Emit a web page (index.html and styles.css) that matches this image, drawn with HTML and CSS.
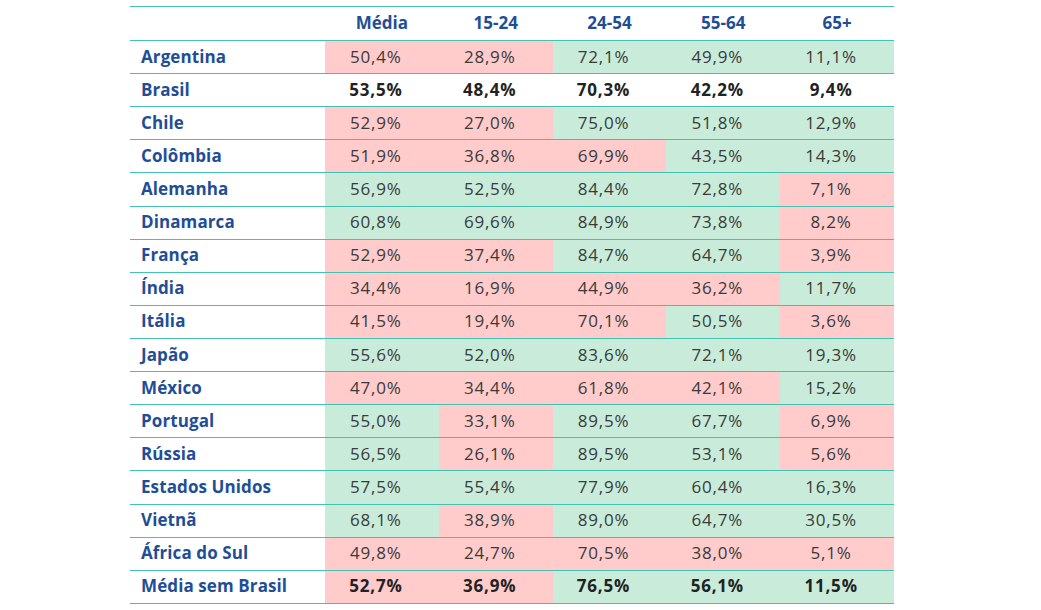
FILE: index.html
```html
<!DOCTYPE html>
<html lang="pt-BR">
<head>
<meta charset="utf-8">
<title>Taxa de participação</title>
<link rel="stylesheet" href="styles.css">
</head>
<body>
<table class="tbl">
  <colgroup>
    <col class="c-label"><col class="c-num"><col class="c-num"><col class="c-num"><col class="c-num"><col class="c-num">
  </colgroup>
  <thead>
    <tr><th></th><th>Média</th><th>15-24</th><th>24-54</th><th>55-64</th><th>65+</th></tr>
  </thead>
  <tbody>
    <tr><th>Argentina</th><td class="r">50,4%</td><td class="r">28,9%</td><td class="g">72,1%</td><td class="g">49,9%</td><td class="g">11,1%</td></tr>
    <tr class="bold"><th>Brasil</th><td>53,5%</td><td>48,4%</td><td>70,3%</td><td>42,2%</td><td>9,4%</td></tr>
    <tr><th>Chile</th><td class="r">52,9%</td><td class="r">27,0%</td><td class="g">75,0%</td><td class="g">51,8%</td><td class="g">12,9%</td></tr>
    <tr><th>Colômbia</th><td class="r">51,9%</td><td class="r">36,8%</td><td class="r">69,9%</td><td class="g">43,5%</td><td class="g">14,3%</td></tr>
    <tr><th>Alemanha</th><td class="g">56,9%</td><td class="g">52,5%</td><td class="g">84,4%</td><td class="g">72,8%</td><td class="r">7,1%</td></tr>
    <tr><th>Dinamarca</th><td class="g">60,8%</td><td class="g">69,6%</td><td class="g">84,9%</td><td class="g">73,8%</td><td class="r">8,2%</td></tr>
    <tr><th>França</th><td class="r">52,9%</td><td class="r">37,4%</td><td class="g">84,7%</td><td class="g">64,7%</td><td class="r">3,9%</td></tr>
    <tr><th>Índia</th><td class="r">34,4%</td><td class="r">16,9%</td><td class="r">44,9%</td><td class="r">36,2%</td><td class="g">11,7%</td></tr>
    <tr><th>Itália</th><td class="r">41,5%</td><td class="r">19,4%</td><td class="r">70,1%</td><td class="g">50,5%</td><td class="r">3,6%</td></tr>
    <tr><th>Japão</th><td class="g">55,6%</td><td class="g">52,0%</td><td class="g">83,6%</td><td class="g">72,1%</td><td class="g">19,3%</td></tr>
    <tr><th>México</th><td class="r">47,0%</td><td class="r">34,4%</td><td class="r">61,8%</td><td class="r">42,1%</td><td class="g">15,2%</td></tr>
    <tr><th>Portugal</th><td class="g">55,0%</td><td class="r">33,1%</td><td class="g">89,5%</td><td class="g">67,7%</td><td class="r">6,9%</td></tr>
    <tr><th>Rússia</th><td class="g">56,5%</td><td class="r">26,1%</td><td class="g">89,5%</td><td class="g">53,1%</td><td class="r">5,6%</td></tr>
    <tr><th>Estados Unidos</th><td class="g">57,5%</td><td class="g">55,4%</td><td class="g">77,9%</td><td class="g">60,4%</td><td class="g">16,3%</td></tr>
    <tr><th>Vietnã</th><td class="g">68,1%</td><td class="r">38,9%</td><td class="g">89,0%</td><td class="g">64,7%</td><td class="g">30,5%</td></tr>
    <tr><th>África do Sul</th><td class="r">49,8%</td><td class="r">24,7%</td><td class="r">70,5%</td><td class="r">38,0%</td><td class="r">5,1%</td></tr>
    <tr class="bold"><th>Média sem Brasil</th><td class="r">52,7%</td><td class="r">36,9%</td><td class="g">76,5%</td><td class="g">56,1%</td><td class="g">11,5%</td></tr>
  </tbody>
</table>
</body>
</html>
```

FILE: styles.css
```css
html, body {
  margin: 0;
  padding: 0;
  background: #ffffff;
}

body {
  padding: 6px 0 0 130px;
  font-family: "Open Sans", "Noto Sans", sans-serif;
}

.tbl {
  border-collapse: collapse;
  table-layout: fixed;
  width: 764px;
}

.c-label { width: 195px; }
.c-num { width: 113.8px; }

.tbl th,
.tbl td {
  border-top: 1px solid #45c1b3;
  border-bottom: 1px solid #45c1b3;
  padding: 0 0 2px 0;
  white-space: nowrap;
}

.tbl thead tr { height: 34px; }
.tbl tbody tr { height: 33.12px; }

.tbl thead th {
  color: #1f4e96;
  font-weight: 700;
  font-size: 17px;
  text-align: center;
}

.tbl tbody th {
  color: #1f4e96;
  font-weight: 700;
  font-size: 17px;
  letter-spacing: 0.1px;
  text-align: left;
  padding-left: 11px;
}

.tbl td {
  color: #3a3a3a;
  font-size: 17px;
  letter-spacing: 0.8px;
  text-align: center;
  padding-right: 12px;
}

.tbl tr.bold td {
  font-weight: 700;
  color: #222222;
}

.tbl td.r { background: #ffcbcb; }
.tbl td.g { background: #c8ecd9; }
```
